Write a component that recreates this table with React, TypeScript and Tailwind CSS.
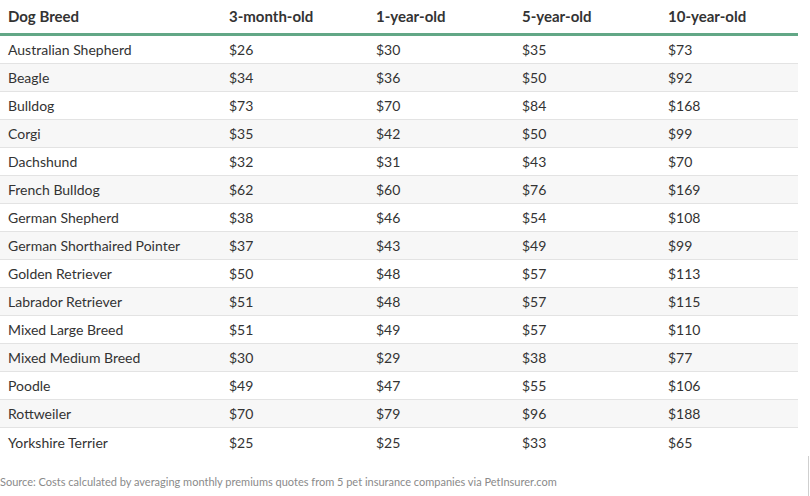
import React from "react";

const rows: [string, string, string, string, string][] = [
  ["Australian Shepherd", "$26", "$30", "$35", "$73"],
  ["Beagle", "$34", "$36", "$50", "$92"],
  ["Bulldog", "$73", "$70", "$84", "$168"],
  ["Corgi", "$35", "$42", "$50", "$99"],
  ["Dachshund", "$32", "$31", "$43", "$70"],
  ["French Bulldog", "$62", "$60", "$76", "$169"],
  ["German Shepherd", "$38", "$46", "$54", "$108"],
  ["German Shorthaired Pointer", "$37", "$43", "$49", "$99"],
  ["Golden Retriever", "$50", "$48", "$57", "$113"],
  ["Labrador Retriever", "$51", "$48", "$57", "$115"],
  ["Mixed Large Breed", "$51", "$49", "$57", "$110"],
  ["Mixed Medium Breed", "$30", "$29", "$38", "$77"],
  ["Poodle", "$49", "$47", "$55", "$106"],
  ["Rottweiler", "$70", "$79", "$96", "$188"],
  ["Yorkshire Terrier", "$25", "$25", "$33", "$65"],
];

const cols = "grid grid-cols-[221px_147px_146px_146px_138px]";

export default function App() {
  return (
    <div className="relative w-[810px] h-[496px] bg-white text-[#333] overflow-hidden" style={{ fontFamily: "Lato, 'Open Sans', sans-serif" }}>
      <div className="w-[798px]">
        <div className={`${cols} h-[36px] items-center border-b-[3px] border-[#62a786] text-[15px] font-bold text-[#333]`}>
          <div className="pl-2">Dog Breed</div>
          <div className="pl-2">3-month-old</div>
          <div className="pl-2">1-year-old</div>
          <div className="pl-2">5-year-old</div>
          <div className="pl-2">10-year-old</div>
        </div>
        {rows.map((r, i) => (
          <div
            key={r[0]}
            className={`${cols} h-[28px] items-center text-[14px] ${i % 2 === 1 ? "bg-[#f7f7f7]" : "bg-white"} ${i < rows.length - 1 ? "border-b border-[#e3e3e3]" : ""}`}
          >
            {r.map((c, j) => (
              <div key={j} className="pl-2">{c}</div>
            ))}
          </div>
        ))}
      </div>
      <div className="mt-[18px] text-[11px] text-[#8a8a8a]">
        Source: Costs calculated by averaging monthly premiums quotes from 5 pet insurance companies via PetInsurer.com
      </div>
      <div className="absolute left-[808px] top-[456px] w-[1px] h-[40px] bg-[#cfcfcf]" />
    </div>
  );
}
